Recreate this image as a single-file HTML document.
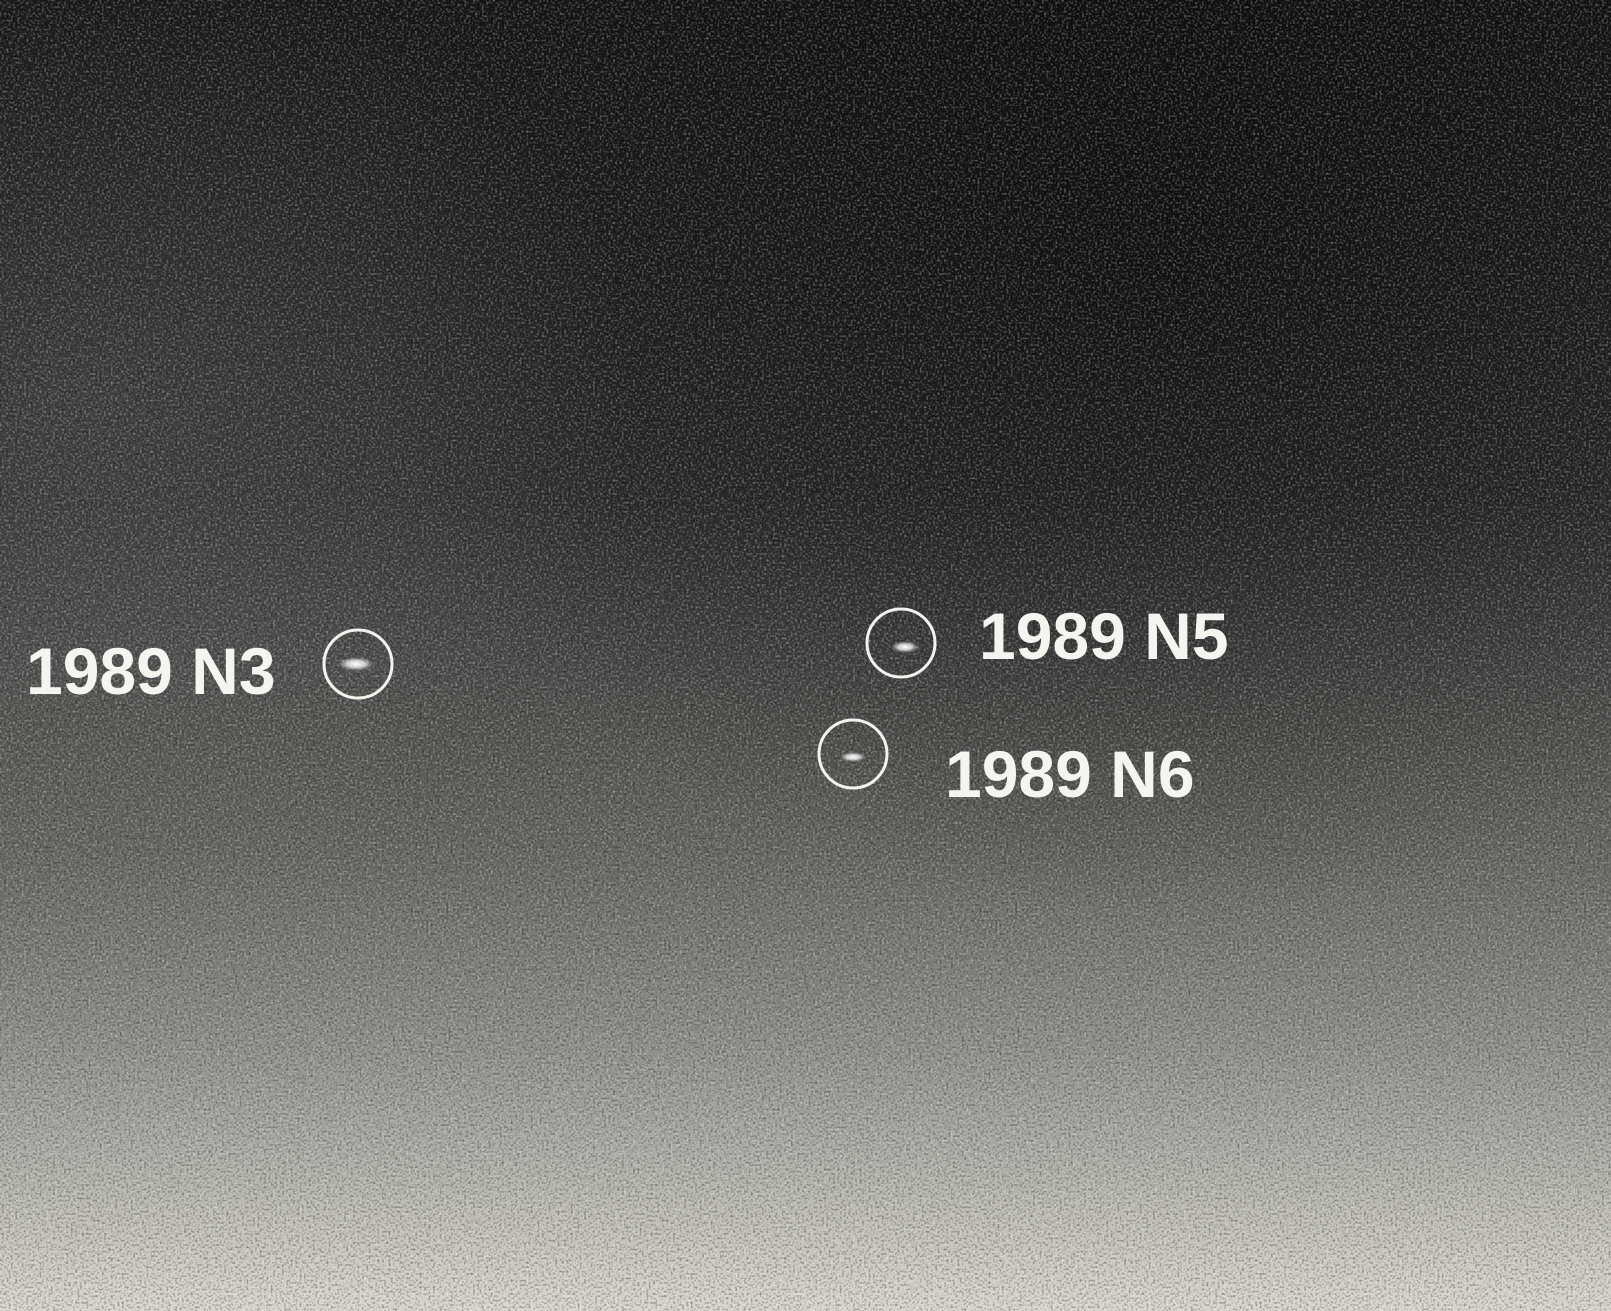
<!DOCTYPE html>
<html><head><meta charset="utf-8"><style>
html,body{margin:0;padding:0;width:1611px;height:1311px;overflow:hidden;background:#222}
svg{display:block}
text{font-family:"Liberation Sans",Arial,sans-serif;font-weight:bold;fill:#f4f4f0;font-size:66px}
</style></head><body>
<svg width="1611" height="1311" viewBox="0 0 1611 1311" xmlns="http://www.w3.org/2000/svg">
<defs>
<linearGradient id="g" x1="0" y1="0" x2="0" y2="1">
<stop offset="0" stop-color="#161616"/>
<stop offset="0.2" stop-color="#222"/>
<stop offset="0.38" stop-color="#303030"/>
<stop offset="0.5" stop-color="#484848"/>
<stop offset="0.65" stop-color="#666664"/>
<stop offset="0.8" stop-color="#90908d"/>
<stop offset="0.92" stop-color="#bcbcb5"/>
<stop offset="1" stop-color="#d8d8d0"/>
</linearGradient>
<radialGradient id="dk" cx="0.72" cy="0.2" r="0.5">
<stop offset="0" stop-color="#000" stop-opacity="0.5"/>
<stop offset="1" stop-color="#000" stop-opacity="0"/>
</radialGradient>
<radialGradient id="lt" cx="0.05" cy="0.3" r="0.35">
<stop offset="0" stop-color="#fff" stop-opacity="0.1"/>
<stop offset="1" stop-color="#fff" stop-opacity="0"/>
</radialGradient>
<filter id="nw" x="0" y="0" width="100%" height="100%">
<feTurbulence type="fractalNoise" baseFrequency="0.45" numOctaves="1" seed="3"/>
<feColorMatrix type="matrix" values="0 0 0 0 1  0 0 0 0 1  0 0 0 0 1  3 0 0 0 -1.4"/>
</filter>
<filter id="nb" x="0" y="0" width="100%" height="100%">
<feTurbulence type="fractalNoise" baseFrequency="0.45" numOctaves="1" seed="11"/>
<feColorMatrix type="matrix" values="0 0 0 0 0  0 0 0 0 0  0 0 0 0 0  3 0 0 0 -1.4"/>
</filter>
<radialGradient id="blob">
<stop offset="0" stop-color="#fff"/>
<stop offset="0.5" stop-color="#eee" stop-opacity="0.8"/>
<stop offset="1" stop-color="#bbb" stop-opacity="0"/>
</radialGradient>
</defs>
<rect width="1611" height="1311" fill="url(#g)"/>
<rect width="1611" height="1311" fill="url(#dk)"/>
<rect width="1611" height="1311" fill="url(#lt)"/>
<rect width="1611" height="1311" filter="url(#nw)" opacity="0.35"/>
<rect width="1611" height="1311" filter="url(#nb)" opacity="0.35"/>
<ellipse cx="356" cy="664" rx="18" ry="7" fill="url(#blob)"/>
<ellipse cx="905" cy="647" rx="14" ry="6" fill="url(#blob)"/>
<ellipse cx="853" cy="757" rx="13" ry="5" fill="url(#blob)"/>
<circle cx="358" cy="664" r="34" fill="none" stroke="#f2f2ee" stroke-width="3"/>
<circle cx="901" cy="643" r="34" fill="none" stroke="#f2f2ee" stroke-width="3"/>
<circle cx="853" cy="754" r="34" fill="none" stroke="#f2f2ee" stroke-width="3"/>
<text x="26" y="694">1989 N3</text>
<text x="979" y="659">1989 N5</text>
<text x="945" y="797">1989 N6</text>
</svg>
</body></html>
